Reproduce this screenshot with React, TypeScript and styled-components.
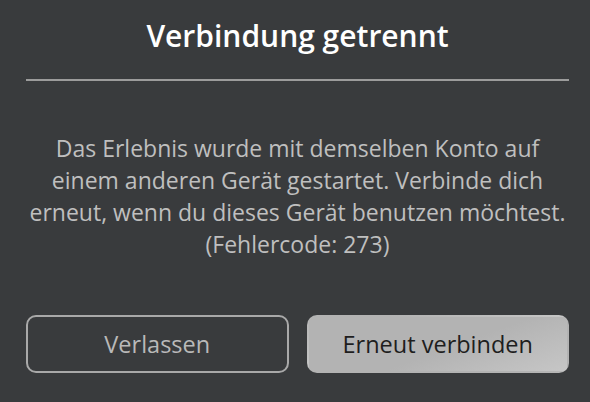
import styled, { createGlobalStyle } from 'styled-components';

const GlobalStyle = createGlobalStyle`
  html, body {
    margin: 0;
    padding: 0;
    background: #393b3d;
  }
  body {
    font-family: "Open Sans", "Noto Sans", sans-serif;
  }
`;

const Dialog = styled.div`
  width: 590px;
  height: 402px;
  box-sizing: border-box;
  padding: 0 21px 0 26px;
  background: #393b3d;
  display: flex;
  flex-direction: column;
`;

const Title = styled.h1`
  margin: 0;
  padding-top: 18px;
  height: 61px;
  font-size: 30px;
  line-height: 36px;
  font-weight: 600;
  color: #ffffff;
  text-align: center;
`;

const Divider = styled.hr`
  margin: 0;
  border: none;
  height: 2px;
  background: #9c9c9c;
`;

const Message = styled.p`
  margin: 51px 0 0;
  font-size: 23px;
  line-height: 32px;
  color: #bfbfbf;
  text-align: center;
`;

const Actions = styled.div`
  margin-top: 55px;
  display: grid;
  grid-template-columns: 1fr 1fr;
  gap: 18px;
`;

const Button = styled.button<{ $primary?: boolean }>`
  height: 58px;
  border-radius: 10px;
  font-family: inherit;
  font-size: 23.5px;
  cursor: pointer;
  border: 2px solid ${(p) => (p.$primary ? 'transparent' : '#a9a9a9')};
  background: ${(p) =>
    p.$primary ? 'linear-gradient(160deg, #b3b3b3 55%, #c6c6c6 100%)' : 'transparent'};
  color: ${(p) => (p.$primary ? '#1e1e1e' : '#b9b9b9')};
`;

export default function App() {
  return (
    <>
      <GlobalStyle />
      <Dialog>
        <Title>Verbindung getrennt</Title>
        <Divider />
        <Message>
          Das Erlebnis wurde mit demselben Konto auf
          <br />
          einem anderen Gerät gestartet. Verbinde dich
          <br />
          erneut, wenn du dieses Gerät benutzen möchtest.
          <br />
          (Fehlercode: 273)
        </Message>
        <Actions>
          <Button>Verlassen</Button>
          <Button $primary>Erneut verbinden</Button>
        </Actions>
      </Dialog>
    </>
  );
}
